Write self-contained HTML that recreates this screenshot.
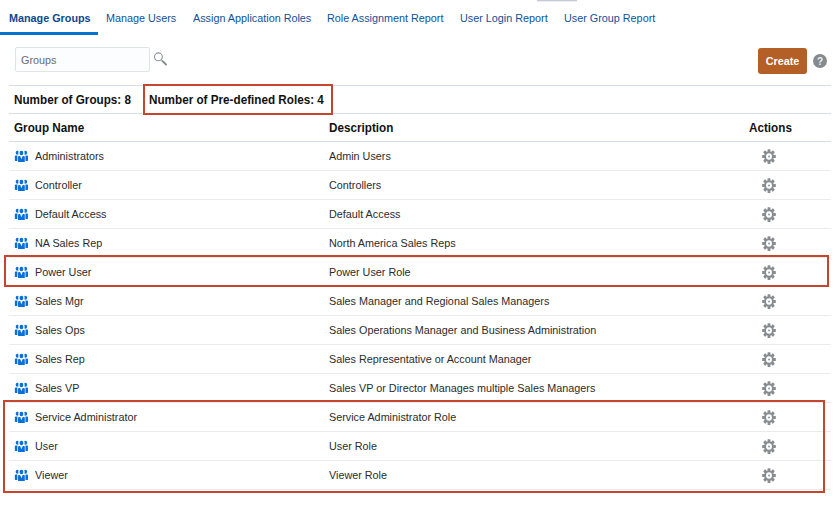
<!DOCTYPE html>
<html><head><meta charset="utf-8">
<style>
html,body{margin:0;padding:0;background:#fff;}
body{width:836px;height:506px;position:relative;overflow:hidden;font-family:"Liberation Sans",sans-serif;font-size:10.8px;color:#333;}
.abs{position:absolute;}
.tab{font-size:11.3px;transform:scaleX(0.956);transform-origin:0 50%;position:absolute;top:11px;line-height:14px;color:#0f5198;white-space:nowrap;}
.tab.sel{font-weight:bold;color:#0c4890;}
.hl{position:absolute;height:1px;background:#d6dfe7;left:9px;width:822px;}
.row{position:absolute;left:9px;width:822px;height:29px;}
.row .ic{overflow:visible;position:absolute;left:6px;top:9px;width:13.2px;height:11.3px;}
.row .nm{font-size:11.3px;transform:scaleX(0.956);transform-origin:0 50%;position:absolute;left:26px;top:7px;line-height:14px;white-space:nowrap;color:#2b2b2b;}
.row .ds{font-size:11.3px;transform:scaleX(0.956);transform-origin:0 50%;position:absolute;left:320px;top:7px;line-height:14px;white-space:nowrap;color:#2b2b2b;}
.row .gr{position:absolute;left:752px;top:6px;width:16px;height:16px;}
.red{position:absolute;border:2px solid #c6452f;box-sizing:border-box;}
</style></head><body>
<svg width="0" height="0" style="position:absolute">
<defs>
<symbol id="grp" viewBox="0.15 0.3 13.2 11.3" overflow="visible">
<g fill="#0a6fd8">
<circle cx="2.75" cy="2" r="1.95"/><circle cx="10.41" cy="2" r="1.95"/>
<ellipse cx="6.58" cy="2.2" rx="3.2" ry="3.3" fill="#fff"/>
<ellipse cx="6.58" cy="2.2" rx="1.9" ry="2.25"/>
<path d="M0 5.7 Q0 4.8 0.9 4.8 H2.5 V10.2 H0.5 Q0 10.2 0 9.7Z"/>
<path d="M13.16 5.7 Q13.16 4.8 12.26 4.8 H10.66 V10.2 H12.66 Q13.16 10.2 13.16 9.7Z"/>
<path d="M3.2 6.3 Q3.2 5.4 4.1 5.4 H5.3 L6.58 8.5 L7.86 5.4 H9.06 Q9.96 5.4 9.96 6.3 V10.75 Q9.96 11.25 9.46 11.25 H3.7 Q3.2 11.25 3.2 10.75Z"/>
</g>
</symbol>
<symbol id="gear" viewBox="-8 -8.55 16 16">
<g fill="#888d91" transform="scale(0.95,1.03)">
<g id="t"><rect x="-1.5" y="-7.2" width="3" height="3.4" rx="0.5"/></g>
<use href="#t" transform="rotate(45)"/><use href="#t" transform="rotate(90)"/><use href="#t" transform="rotate(135)"/>
<use href="#t" transform="rotate(180)"/><use href="#t" transform="rotate(225)"/><use href="#t" transform="rotate(270)"/><use href="#t" transform="rotate(315)"/>
<path fill-rule="evenodd" d="M0-5.1A5.1 5.1 0 1 1 0 5.1A5.1 5.1 0 1 1 0-5.1ZM0-3.1A3.1 3.1 0 1 0 0 3.1A3.1 3.1 0 1 0 0-3.1Z"/>
<circle r="0.95"/>
</g>
</symbol>
</defs></svg>

<div class="abs" style="left:537px;top:0;width:40px;height:1px;background:#c5c9d6"></div><div class="abs" style="left:537px;top:1px;width:40px;height:1px;background:#eceef3"></div>
<div class="tab sel" style="left:8.5px">Manage Groups</div>
<div class="tab" style="left:106px">Manage Users</div>
<div class="tab" style="left:193px">Assign Application Roles</div>
<div class="tab" style="left:327px">Role Assignment Report</div>
<div class="tab" style="left:460px">User Login Report</div>
<div class="tab" style="left:564px">User Group Report</div>
<div class="abs" style="left:0;top:32px;width:98px;height:3px;background:#0572ce"></div>

<div class="abs" style="left:15px;top:47px;width:135px;height:25px;box-sizing:border-box;border:1px solid #dfe4e7;border-radius:2px;background:#fcfdfe;"></div>
<div class="abs" style="left:21px;top:53px;line-height:14px;color:#6b6b6b;font-size:11.3px;transform:scaleX(0.956);transform-origin:0 50%;">Groups</div>
<svg class="abs" style="left:152px;top:52px" width="16" height="16" viewBox="0 0 16 16"><circle cx="6.4" cy="4.8" r="3.9" fill="none" stroke="#8f9498" stroke-width="1.1"/><path d="M10.3 8.9 L14 12.5" stroke="#8a8f93" stroke-width="2" stroke-linecap="round"/></svg>

<div class="abs" style="left:758px;top:48px;width:49px;height:26px;background:#b35f25;border-radius:3px;color:#fff;font-weight:bold;text-align:center;line-height:26px;">Create</div>
<div class="abs" style="left:813px;top:54px;width:14px;height:14px;border-radius:7px;background:#858a8e;color:#f0f0f0;font-weight:bold;font-size:10px;line-height:16px;text-align:center;">?</div>

<div class="hl" style="top:85px"></div>
<div class="abs" style="left:14px;top:93px;line-height:15px;font-weight:bold;font-size:12.5px;color:#111;transform:scaleX(0.936);transform-origin:0 50%;white-space:nowrap;">Number of Groups: 8</div>
<div class="abs" style="left:149px;top:93px;line-height:15px;font-weight:bold;font-size:12.5px;color:#111;transform:scaleX(0.936);transform-origin:0 50%;white-space:nowrap;">Number of Pre-defined Roles: 4</div>
<div class="hl" style="top:113px"></div>
<div class="abs" style="left:14px;top:121px;line-height:15px;font-weight:bold;font-size:12.5px;color:#111;transform:scaleX(0.936);transform-origin:0 50%;white-space:nowrap;">Group Name</div>
<div class="abs" style="left:329px;top:121px;line-height:15px;font-weight:bold;font-size:12.5px;color:#111;transform:scaleX(0.936);transform-origin:0 50%;white-space:nowrap;">Description</div>
<div class="abs" style="left:749px;top:121px;line-height:15px;font-weight:bold;font-size:12.5px;color:#111;transform:scaleX(0.936);transform-origin:0 50%;white-space:nowrap;">Actions</div>
<div class="hl" style="top:141px"></div>

<div class="row" style="top:142px"><svg class="ic"><use href="#grp"/></svg><div class="nm">Administrators</div><div class="ds">Admin Users</div><svg class="gr"><use href="#gear"/></svg></div>
<div class="hl" style="top:170px;background:#ebebeb"></div>
<div class="row" style="top:171px"><svg class="ic"><use href="#grp"/></svg><div class="nm">Controller</div><div class="ds">Controllers</div><svg class="gr"><use href="#gear"/></svg></div>
<div class="hl" style="top:199px;background:#ebebeb"></div>
<div class="row" style="top:200px"><svg class="ic"><use href="#grp"/></svg><div class="nm">Default Access</div><div class="ds">Default Access</div><svg class="gr"><use href="#gear"/></svg></div>
<div class="hl" style="top:228px;background:#ebebeb"></div>
<div class="row" style="top:229px"><svg class="ic"><use href="#grp"/></svg><div class="nm">NA Sales Rep</div><div class="ds">North America Sales Reps</div><svg class="gr"><use href="#gear"/></svg></div>
<div class="hl" style="top:257px;background:#ebebeb"></div>
<div class="row" style="top:258px"><svg class="ic"><use href="#grp"/></svg><div class="nm">Power User</div><div class="ds">Power User Role</div><svg class="gr"><use href="#gear"/></svg></div>
<div class="hl" style="top:286px;background:#ebebeb"></div>
<div class="row" style="top:287px"><svg class="ic"><use href="#grp"/></svg><div class="nm">Sales Mgr</div><div class="ds">Sales Manager and Regional Sales Managers</div><svg class="gr"><use href="#gear"/></svg></div>
<div class="hl" style="top:315px;background:#ebebeb"></div>
<div class="row" style="top:316px"><svg class="ic"><use href="#grp"/></svg><div class="nm">Sales Ops</div><div class="ds">Sales Operations Manager and Business Administration</div><svg class="gr"><use href="#gear"/></svg></div>
<div class="hl" style="top:344px;background:#ebebeb"></div>
<div class="row" style="top:345px"><svg class="ic"><use href="#grp"/></svg><div class="nm">Sales Rep</div><div class="ds">Sales Representative or Account Manager</div><svg class="gr"><use href="#gear"/></svg></div>
<div class="hl" style="top:373px;background:#ebebeb"></div>
<div class="row" style="top:374px"><svg class="ic"><use href="#grp"/></svg><div class="nm">Sales VP</div><div class="ds">Sales VP or Director Manages multiple Sales Managers</div><svg class="gr"><use href="#gear"/></svg></div>
<div class="hl" style="top:402px;background:#ebebeb"></div>
<div class="row" style="top:403px"><svg class="ic"><use href="#grp"/></svg><div class="nm">Service Administrator</div><div class="ds">Service Administrator Role</div><svg class="gr"><use href="#gear"/></svg></div>
<div class="hl" style="top:431px;background:#ebebeb"></div>
<div class="row" style="top:432px"><svg class="ic"><use href="#grp"/></svg><div class="nm">User</div><div class="ds">User Role</div><svg class="gr"><use href="#gear"/></svg></div>
<div class="hl" style="top:460px;background:#ebebeb"></div>
<div class="row" style="top:461px"><svg class="ic"><use href="#grp"/></svg><div class="nm">Viewer</div><div class="ds">Viewer Role</div><svg class="gr"><use href="#gear"/></svg></div>
<div class="hl" style="top:489px;background:#ebebeb"></div>


<div class="red" style="left:143px;top:84px;width:190px;height:31px;"></div>
<div class="red" style="left:4px;top:255px;width:825px;height:32px;"></div>
<div class="red" style="left:3px;top:400px;width:822px;height:93px;"></div>
</body></html>
